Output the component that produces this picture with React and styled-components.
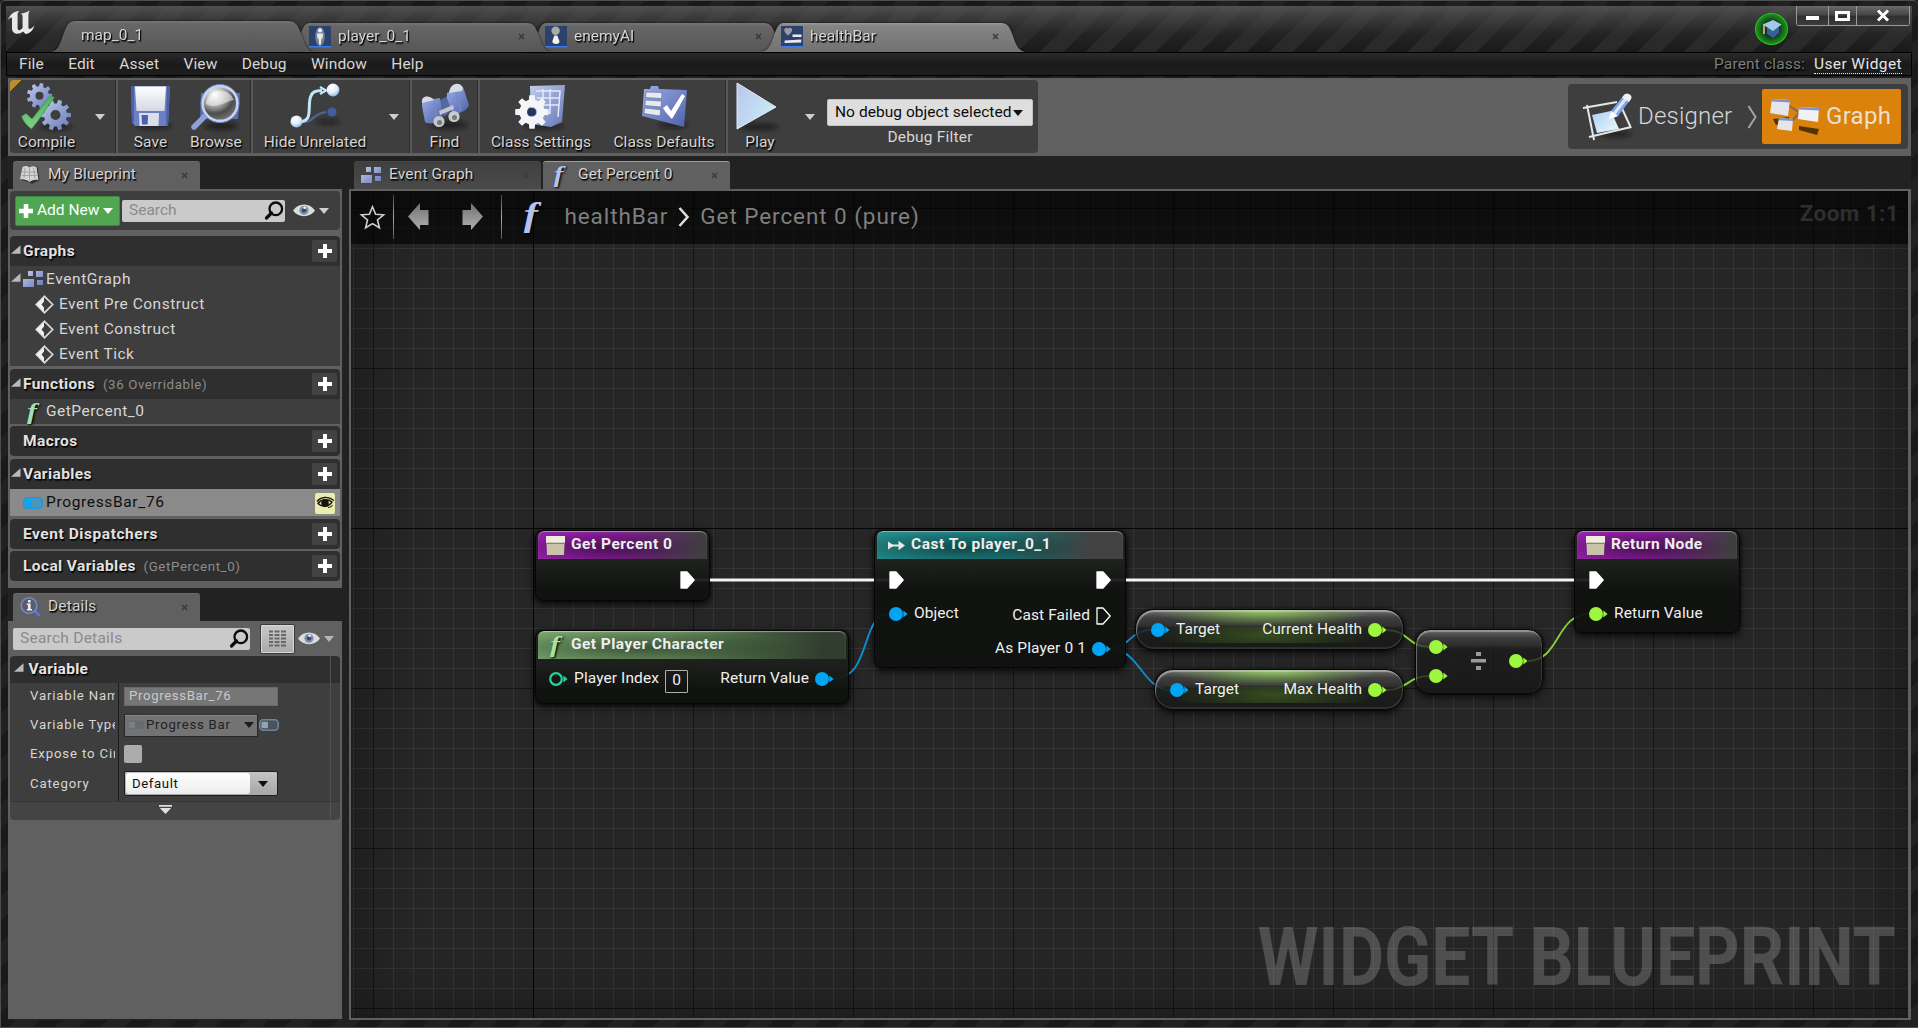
import React from "react";
import styled, { createGlobalStyle, css } from "styled-components";

const Global = createGlobalStyle`
  html, body { margin: 0; padding: 0; background: #1b1b1b; }
  * { box-sizing: border-box; }
  body { overflow: hidden; font-family: Roboto, "Liberation Sans", sans-serif; font-size: 15.5px; color: #d4d4d4; }
  svg { display: block; flex: none; overflow: visible; }
`;

const Text = styled.span`
  white-space: pre;
  line-height: 1;
  flex: none;
  margin-top: ${(p) => p.$dy || 0}px;
  font-size: ${(p) => p.$size || 15.5}px;
  font-weight: ${(p) => p.$weight || 400};
  letter-spacing: ${(p) => p.$ls || 0}px;
  color: ${(p) => p.$color || "#d6d6d6"};
  ${(p) => p.$shadow && css`text-shadow: 1px 1px 1px #000, 1px 2px 1px rgba(0, 0, 0, 0.6);`}
`;

/* ---------- window frame ---------- */

const Window = styled.div`
  width: 1918px;
  height: 1028px;
  display: flex;
  flex-direction: column;
  border: 1px solid #4d4f4e;
  border-width: 1px 0 1px 1px;
  border-radius: 5px 5px 0 0;
  background: repeating-linear-gradient(135deg, #191919 0 16px, #212121 16px 32.5px);
`;

const TitleBar = styled.header`
  height: 46px;
  margin: 5px 6px 0 5px;
  display: flex;
  justify-content: space-between;
  background: linear-gradient(180deg, rgba(84, 84, 84, 0.9) 0, rgba(72, 72, 72, 0.75) 10px, rgba(44, 44, 44, 0.55) 28px, rgba(30, 30, 30, 0.2) 100%),
    repeating-linear-gradient(135deg, #191919 0 16px, #2b2b2b 16px 32.5px);
`;

const TitleLeft = styled.div`
  display: flex;
  align-items: flex-end;
`;

const LogoBox = styled.div`
  width: 45px;
  height: 46px;
  padding: 4px 0 0 1px;
`;

const tabShape = (h) =>
  `path("M0 ${h} C9 ${h - 2} 10 ${h - 13} 14 ${h - 22} C17 ${h - 29} 19 0 25 0 L237 0 C244 0 246 ${h - 28} 249 ${h - 21} C253 ${h - 12} 254 ${h - 2} 263 ${h} Z")`;

const FileTabShell = styled.div`
  width: 263px;
  height: ${(p) => p.$h}px;
  margin-right: -26px;
  position: relative;
  z-index: ${(p) => p.$z};
  filter: drop-shadow(0 0 1px rgba(0, 0, 0, 0.75));
`;

const FileTabFace = styled.div`
  height: 100%;
  clip-path: ${(p) => tabShape(p.$h)};
  background: ${(p) =>
    p.$active
      ? "linear-gradient(180deg, #999 0, #848484 3px, #727272 100%)"
      : "linear-gradient(180deg, #767676 0, #676767 3px, #565656 100%)"};
  display: flex;
  align-items: center;
  gap: 7px;
  padding: 0 26px 2px ${(p) => p.$pad}px;
`;

const Push = styled.div`flex: 1;`;

const TitleRight = styled.div`
  display: flex;
  align-items: flex-start;
  gap: 8px;
  padding-right: 2px;
`;

const Badge = styled.div`
  margin-top: 7px;
  width: 33px;
  height: 32px;
  border-radius: 50%;
  border: 1px solid #19cf19;
  background: radial-gradient(circle, #14351a 35%, #1c7d1c 62%, #17b617 100%);
  display: grid;
  place-items: center;
`;

const WinButtons = styled.div`
  display: flex;
  height: 20px;
  border: 1px solid #9a9a9a;
  border-top: 0;
  border-radius: 0 0 3px 3px;
`;

const WinButton = styled.div`
  width: ${(p) => p.$w}px;
  padding-top: ${(p) => p.$pt || 0}px;
  display: grid;
  place-items: center;
  background: linear-gradient(180deg, #6a6a6a, #474747 45%, #2f2f2f 55%, #3c3c3c);
  & + & { border-left: 1px solid #9a9a9a; }
`;

const MenuBar = styled.nav`
  height: 24px;
  margin: 0 6px 0 5px;
  padding: 1px 9px 0 12px;
  display: flex;
  align-items: center;
  justify-content: space-between;
  border: 1px solid #000;
  background: linear-gradient(180deg, #2b2b2b, #1a1a1a 50%, #1e1e1e);
`;

const MenuGroup = styled.div`
  display: flex;
  gap: ${(p) => p.$gap}px;
  align-items: center;
`;

const ClassLink = styled.div`
  border-bottom: 1px dotted #e5e5e5;
  height: 19px;
  display: flex;
  align-items: center;
`;

/* ---------- toolbar ---------- */

const Toolbar = styled.div`
  height: 78px;
  margin: 2px 7px 0 7px;
  padding: 2px 2px 3px 2px;
  background: #606060;
  display: flex;
  justify-content: space-between;
  align-items: center;
`;

const ToolGroup = styled.div`
  height: 73px;
  width: 1028px;
  display: flex;
  border-radius: 4px;
  background: ${(p) =>
    p.$dirty
      ? "linear-gradient(135deg, #b98e2c 0 8px, transparent 8px), #3e3e3e"
      : "#3e3e3e"};
`;

const ToolSection = styled.div`
  display: flex;
  padding-right: ${(p) => p.$end || 0}px;
  & + & {
    border-left: 2px solid #585858;
    box-shadow: -1px 0 0 #2b2b2b;
  }
`;

const ToolButton = styled.div`
  width: ${(p) => p.$w}px;
  display: flex;
  flex-direction: column;
  align-items: center;
  gap: 3px;
  padding-top: 2px;
`;

const IconSlot = styled.div`
  height: 50px;
  padding-right: ${(p) => p.$nudge || 0}px;
  display: grid;
  place-items: center;
`;

const CaretButton = styled.div`
  width: ${(p) => p.$w}px;
  display: flex;
  justify-content: center;
  padding-top: 34px;
`;

const DebugBox = styled.div`
  width: 206px;
  padding-top: 19px;
  display: flex;
  flex-direction: column;
  align-items: center;
  gap: 4px;
`;

const DebugSelect = styled.div`
  align-self: stretch;
  height: 27px;
  border-radius: 2px;
  background: #dedede;
  border: 1px solid #c2c2c2;
  display: flex;
  align-items: center;
  justify-content: space-between;
  padding: 0 9px 0 7px;
`;

const ModeSwitch = styled.div`
  width: 340px;
  height: 65px;
  margin-right: 1px;
  border-radius: 4px;
  background: #3e3e3e;
  display: flex;
  align-items: center;
  padding: 0 6px 0 15px;
`;

const ModeItem = styled.div`
  height: 55px;
  display: flex;
  align-items: center;
  gap: ${(p) => (p.$active ? 7 : 5)}px;
  ${(p) =>
    p.$active
      ? css`width: 139px; padding-left: 8px; background: #da820b; border-radius: 2px; margin-left: 5px;`
      : css`width: 164px;`}
`;

/* ---------- docking ---------- */

const Work = styled.main`
  flex: 1;
  min-height: 0;
  margin: 0 7px 7px 7px;
  padding-top: 5px;
  display: flex;
  gap: 7px;
  background: #222;
`;

const SideColumn = styled.aside`
  width: 334px;
  display: flex;
  flex-direction: column;
`;

const DockTabs = styled.div`
  display: flex;
  gap: 2px;
  height: 28px;
  margin-top: ${(p) => p.$mt || 0}px;
  padding-left: 5px;
`;

const DockTab = styled.div`
  width: 187px;
  border-radius: 3px 3px 0 0;
  border-top: 1px solid ${(p) => (p.$mark ? "#b9a232" : p.$dim ? "#454545" : "#6b6b6b")};
  background: ${(p) => (p.$dim ? "linear-gradient(180deg, #404040, #4a4a4a)" : "#606060")};
  display: flex;
  align-items: center;
  padding: 0 12px 1px 7px;
`;

const TabIcon = styled.div`
  width: ${(p) => p.$w || 28}px;
  flex: none;
`;

const Panel = styled.section`
  background: #606060;
  padding: 2px 2px 0;
  height: ${(p) => p.$h}px;
`;

const PanelTools = styled.div`
  height: ${(p) => p.$h}px;
  margin-bottom: ${(p) => p.$mb || 0}px;
  border-radius: 4px;
  background: ${(p) => (p.$flat ? "transparent" : "#3e3e3e")};
  display: flex;
  align-items: center;
  padding-left: ${(p) => p.$pl}px;
`;

const AddNew = styled.div`
  width: 105px;
  height: 30px;
  border-radius: 2px;
  background: #50a651;
  border: 1px solid #3d8a40;
  display: flex;
  align-items: center;
  gap: 4px;
  padding-left: 3px;
`;

const SearchField = styled.div`
  width: ${(p) => p.$w}px;
  height: 22px;
  margin-left: ${(p) => p.$ml || 0}px;
  border-radius: 2px;
  background: #cacaca;
  display: flex;
  align-items: center;
  justify-content: space-between;
  padding: 0 1px 0 7px;
`;

const EyeMenu = styled.div`
  display: flex;
  align-items: center;
  gap: 4px;
  margin-left: ${(p) => p.$ml}px;
`;

const SectionHead = styled.div`
  height: 30px;
  margin-top: ${(p) => p.$mt || 0}px;
  border-radius: ${(p) => (p.$open ? "4px 4px 0 0" : "4px")};
  background: #2f2f2f;
  display: flex;
  align-items: center;
  padding-right: 3px;
`;

const Expander = styled.div`
  width: 13px;
  padding: 0 0 4px 1px;
  flex: none;
`;

const PlusButton = styled.div`
  width: 25px;
  height: 22px;
  margin-left: auto;
  border-radius: 2px;
  background: #424242;
  display: grid;
  place-items: center;
`;

const TreeRow = styled.div`
  height: ${(p) => p.$h || 25}px;
  background: ${(p) => (p.$selected ? "#8a8a8a" : "#3e3e3e")};
  display: flex;
  align-items: center;
  padding: 1px 5px 0 ${(p) => p.$pl || 0}px;
  gap: ${(p) => p.$gap || 0}px;
`;

const EyeToggle = styled.div`
  width: 20px;
  height: 21px;
  margin-left: auto;
  border-radius: 2px;
  background: #ecebb0;
  display: grid;
  place-items: center;
`;

const GridToggle = styled.div`
  width: 35px;
  height: 30px;
  margin-left: 10px;
  border: 1px solid #3a3a3a;
  border-radius: 2px;
  background: linear-gradient(180deg, #c9c9c9, #a9a9a9);
  box-shadow: inset 0 0 0 1px #d8d8d8;
  display: grid;
  place-items: center;
`;

const DetailsBox = styled.div`
  height: 164px;
  border-radius: 4px;
  background:
    linear-gradient(#505050, #505050) 320px 0 / 1px 162px no-repeat,
    linear-gradient(#2f2f2f, #2f2f2f) 0 0 / 100% 27px no-repeat,
    #3e3e3e;
  overflow: hidden;
  display: flex;
  flex-direction: column;
`;

const DetailsHead = styled.div`
  height: 27px;
  display: flex;
  align-items: center;
  gap: 5px;
  padding-left: 4px;
`;

const HeadArrow = styled.div`padding-bottom: 4px;`;

const PropRow = styled.div`
  height: ${(p) => p.$h}px;
  display: grid;
  grid-template-columns: 109px 1fr;
`;

const PropName = styled.div`
  padding-left: 20px;
  border-right: 1px solid #1c1c1c;
  display: flex;
  align-items: center;
`;

const Clip = styled.div`
  width: 85px;
  height: 18px;
  display: flex;
  align-items: center;
  overflow: hidden;
`;

const PropValue = styled.div`
  display: flex;
  align-items: center;
  gap: 1px;
  padding-left: 5px;
`;

const TextInput = styled.div`
  width: 154px;
  height: 19px;
  background: #767676;
  border: 1px solid #6a6a6a;
  display: flex;
  align-items: center;
  padding-left: 4px;
`;

const TypeButton = styled.div`
  width: 134px;
  height: 23px;
  background: #737373;
  border: 1px solid #272727;
  border-top-color: #333;
  box-shadow: inset 0 1px 0 #858585;
  display: flex;
  align-items: center;
  padding: 0 3px 0 1px;
`;

const CheckBox = styled.div`
  width: 18px;
  height: 18px;
  border-radius: 2px;
  background: #acacac;
`;

const Combo = styled.div`
  width: 154px;
  height: 25px;
  border: 1px solid #1f1f1f;
  border-radius: 2px;
  background: linear-gradient(180deg, #c4c4c4, #a6a6a6);
  display: flex;
  align-items: center;
`;

const ComboText = styled.div`
  width: 124px;
  height: 21px;
  margin: 0 8px 0 1px;
  border-radius: 3px;
  background: linear-gradient(180deg, #fff, #ececec);
  display: flex;
  align-items: center;
  padding-left: 6px;
`;

const MoreBar = styled.div`
  flex: 1;
  background: rgba(255, 255, 255, 0.035);
  border-top: 1px solid #373737;
  display: flex;
  justify-content: center;
  padding: 3px 20px 0 0;
`;

/* ---------- graph canvas ---------- */

const GraphColumn = styled.div`
  flex: 1;
  display: flex;
  flex-direction: column;
`;

const Canvas = styled.div`
  flex: 1;
  position: relative;
  overflow: hidden;
  border: 2px solid #606060;
  border-right-width: 3px;
  background:
    linear-gradient(#050505, #050505) 182px 0 / 1px 100% no-repeat,
    linear-gradient(#050505, #050505) 0 337px / 100% 1px no-repeat,
    linear-gradient(90deg, #141414 1px, transparent 1px) 22px 0 / 160px 160px,
    linear-gradient(180deg, #141414 1px, transparent 1px) 0 17px / 160px 160px,
    linear-gradient(90deg, #353535 1px, transparent 1px) 2px 0 / 20px 20px,
    linear-gradient(180deg, #353535 1px, transparent 1px) 0 17px / 20px 20px,
    #262626;
`;

const Vignette = styled.div`
  position: absolute;
  inset: 0;
  box-shadow: inset 0 0 70px rgba(0, 0, 0, 0.4);
`;

const Crumbs = styled.div`
  position: relative;
  height: 53px;
  background: rgba(0, 0, 0, 0.6);
  display: flex;
  align-items: center;
  padding: 0 9px 2px 9px;
`;

const CrumbRule = styled.div`
  width: 1px;
  height: 44px;
  margin-right: ${(p) => p.$mr}px;
  background: linear-gradient(180deg, #444, #aaa 50%, #555);
`;

const CrumbIcon = styled.div`margin: 0 ${(p) => p.$mr}px 0 ${(p) => p.$ml || 0}px;`;

const ZoomLabel = styled.div`padding-bottom: 7px; display: flex;`;

const Watermark = styled.div`
  position: absolute;
  right: 12px;
  bottom: 20px;
  font-size: 81.5px;
  line-height: 1;
  font-weight: 700;
  white-space: pre;
  color: rgba(255, 255, 255, 0.19);
  transform-origin: 100% 50%;
  transform: scaleX(0.852);
`;

const Wires = styled.svg`
  position: absolute;
  left: 0;
  top: 0;
`;

const Node = styled.div`
  position: absolute;
  left: ${(p) => p.$x - 351}px;
  top: ${(p) => p.$y - 191}px;
  width: ${(p) => p.$w}px;
  height: ${(p) => p.$h}px;
  border-radius: 8px;
  border: 1px solid #060606;
  overflow: hidden;
  background: linear-gradient(180deg, rgba(30, 32, 30, 0.93) 30px, rgba(14, 17, 14, 0.93) 60px, rgba(14, 17, 14, 0.95));
`;

const NodeShadow = styled.div`
  position: absolute;
  left: ${(p) => p.$x - 351}px;
  top: ${(p) => p.$y - 191}px;
  width: ${(p) => p.$w}px;
  height: ${(p) => p.$h}px;
  border-radius: ${(p) => p.$r || 8}px;
  box-shadow: 0 3px 8px rgba(0, 0, 0, 0.75), 0 0 3px rgba(0, 0, 0, 0.8);
`;

const headTint = {
  purple: "radial-gradient(ellipse 55% 60% at 42% 60%, rgba(30,8,34,.6), transparent), linear-gradient(100deg, #931fa8 0, #8a1c9e 45%, #5b2f63 75%, #3e3e3e 96%)",
  teal: "radial-gradient(ellipse 50% 60% at 36% 60%, rgba(6,34,34,.6), transparent), linear-gradient(100deg, #228a8a 0, #1e7f7f 48%, #2d5555 70%, #424242 86%)",
  green: "radial-gradient(ellipse 50% 60% at 34% 60%, rgba(30,42,28,.6), transparent), linear-gradient(100deg, #74a06a 0, #688f5e 42%, #435e3e 70%, #313d2f 92%)",
};

const NodeHead = styled.div`
  height: 28px;
  margin: 0 2px;
  border-radius: 6px 6px 0 0;
  background: ${(p) => headTint[p.$tint]};
  box-shadow: inset 0 1px 1px rgba(255, 255, 255, 0.45);
  display: flex;
  align-items: center;
  padding: 2px 0 2px ${(p) => p.$pl || 8}px;
`;

const HeadIcon = styled.div`width: ${(p) => p.$w || 25}px;`;

const PinRow = styled.div`
  height: ${(p) => p.$h}px;
  margin-top: ${(p) => p.$mt || 0}px;
  padding: 0 ${(p) => p.$pr || 14}px 0 ${(p) => p.$pl || 14}px;
  display: flex;
  align-items: center;
  justify-content: ${(p) => (p.$end ? "flex-end" : "space-between")};
`;

const PinGroup = styled.div`
  display: flex;
  align-items: center;
  gap: 6px;
  padding-top: ${(p) => p.$drop || 0}px;
`;

const IndexBox = styled.div`
  width: 23px;
  height: 23px;
  margin-top: 4px;
  border: 1px solid #b0b0b0;
  border-radius: 1px;
  display: grid;
  place-items: center;
`;

const Pill = styled(Node)`
  border-radius: 19px;
  display: flex;
  align-items: center;
  justify-content: space-between;
  padding: 1px 16px 0 15px;
  background:
    radial-gradient(ellipse 42% 100% at 48% 0, rgba(156, 212, 104, 0.9), rgba(125, 176, 84, 0.45) 60%, transparent) 0 0 / 100% 17px no-repeat,
    radial-gradient(ellipse 42% 140% at 48% 50%, rgba(62, 92, 32, 0.75), transparent) 0 17px / 100% 16px no-repeat,
    linear-gradient(180deg, #707070 0, rgba(64, 64, 64, 0.9) 8px, rgba(50, 50, 50, 0.8) 16px, rgba(26, 28, 26, 0.8) 18px, rgba(20, 22, 20, 0.8) 100%);
  box-shadow: inset 1px 2px 1px rgba(220, 220, 220, 0.5), inset -1px 0 1px rgba(150, 150, 150, 0.3), inset 0 -2px 1px rgba(110, 110, 110, 0.25);
`;

const MathNode = styled(Node)`
  border-radius: 15px;
  background: linear-gradient(180deg, #686868 0, rgba(62, 62, 62, 0.9) 8px, rgba(46, 46, 46, 0.75) 16px, rgba(26, 26, 26, 0.75) 18px, rgba(22, 22, 22, 0.8) 100%);
  box-shadow: inset 1px 2px 1px rgba(210, 210, 210, 0.45), inset -1px 0 1px rgba(150, 150, 150, 0.25);
  display: flex;
  align-items: center;
  justify-content: space-between;
  padding: 0 14px 1px 13px;
`;

const PinColumn = styled.div`
  display: flex;
  flex-direction: column;
  gap: 15px;
`;

/* ---------- icons ---------- */

const gear = (cx, cy, r, n) => {
  const pts = [];
  for (let i = 0; i < n; i++) {
    const a = (i / n) * Math.PI * 2;
    const s = (Math.PI * 2) / n;
    [[-0.32, 0.74], [-0.2, 1], [0.2, 1], [0.32, 0.74]].forEach(([o, k]) => {
      pts.push(`${(cx + Math.cos(a + o * s) * r * k).toFixed(2)} ${(cy + Math.sin(a + o * s) * r * k).toFixed(2)}`);
    });
  }
  return `M${pts.join("L")}Z`;
};

const DefsHost = styled.svg`
  position: absolute;
`;

const Defs = () => (
  <DefsHost width="0" height="0">
    <defs>
      <linearGradient id="blue" x1="0" y1="0" x2="1" y2="1">
        <stop offset="0" stopColor="#c3cdec" />
        <stop offset="1" stopColor="#6478b8" />
      </linearGradient>
      <linearGradient id="deep" x1="0" y1="0" x2="1" y2="1">
        <stop offset="0" stopColor="#9bade6" />
        <stop offset="1" stopColor="#4d62a8" />
      </linearGradient>
      <linearGradient id="pale" x1="0" y1="0" x2="0" y2="1">
        <stop offset="0" stopColor="#fff" />
        <stop offset="1" stopColor="#d4d8e4" />
      </linearGradient>
      <linearGradient id="check" x1="0" y1="0" x2="0" y2="1">
        <stop offset="0" stopColor="#49b25b" />
        <stop offset="1" stopColor="#7fd08a" />
      </linearGradient>
      <radialGradient id="lens" cx=".35" cy=".25" r=".9">
        <stop offset="0" stopColor="#fff" />
        <stop offset=".4" stopColor="#9a9a9a" />
        <stop offset=".6" stopColor="#4c4c4c" />
        <stop offset="1" stopColor="#8d8d8d" />
      </radialGradient>
      <radialGradient id="ball" cx=".4" cy=".3" r=".8">
        <stop offset="0" stopColor="#fff" />
        <stop offset=".5" stopColor="#e4efff" />
        <stop offset="1" stopColor="#7aa5dd" />
      </radialGradient>
      <linearGradient id="play" x1="0" y1="0" x2="1" y2=".6">
        <stop offset="0" stopColor="#b9c5ec" />
        <stop offset="1" stopColor="#c8ecf4" />
      </linearGradient>
      <linearGradient id="sketch" x1="0" y1="0" x2="1" y2="1">
        <stop offset="0" stopColor="#aacdf3" />
        <stop offset="1" stopColor="#f2fbff" />
      </linearGradient>
      <linearGradient id="grey" x1="0" y1="0" x2="0" y2="1">
        <stop offset="0" stopColor="#707070" />
        <stop offset="1" stopColor="#b0b0b0" />
      </linearGradient>
      <filter id="soft" x="-50%" y="-100%" width="200%" height="300%">
        <feGaussianBlur stdDeviation="2" />
      </filter>
    </defs>
  </DefsHost>
);

const Shade = ({ cx, cy, rx, ry }) => (
  <ellipse cx={cx} cy={cy} rx={rx} ry={ry} fill="#111" opacity=".6" filter="url(#soft)" />
);

const Logo = () => (
  <svg width="28" height="25" viewBox="0 0 28 25">
    <path
      d="M1 10 C3 4 7 1.5 12 1 L10.6 3.4 V18 C10.6 20 12 20.6 13.2 20 L15.6 18 V5.4 L14 3.6 C17 3.4 20 2.4 22.6 0.6 L21.4 4 V17.4 C21.6 19.6 24 19.4 27.4 15.4 C26 20.6 22.6 23.6 18.6 24 L16 21.4 C13.6 23.6 10.6 24 8.4 23.4 C6 22.6 5 21 5 18.6 V9 C5 6.6 3 7.4 1 10 Z"
      fill="#e8e8e8"
    />
  </svg>
);

const CloseX = () => (
  <svg width="7" height="7" viewBox="0 0 7 7">
    <path d="M1 1L6 6M6 1L1 6" stroke="#3a3a3a" strokeWidth="1.500" />
  </svg>
);

const Caret = ({ w = 10, h = 6, color = "#cfcfcf" }) => (
  <svg width={w} height={h} viewBox="0 0 10 6">
    <path d="M0 0H10L5 6Z" fill={color} />
  </svg>
);

const AssetIcon = ({ kind }) => (
  <svg width="22" height="21" viewBox="0 0 22 21">
    <rect width="22" height="21" fill="#2c426d" />
    <rect y="20" width="22" height="1.4" fill="#3b7cf0" />
    {kind === "player" && (
      <g>
        <ellipse cx="11" cy="10.5" rx="4.800" ry="9.6" fill="#8f9aac" opacity=".7" />
        <circle cx="11" cy="4.4" r="2.1" fill="#eee" />
        <path d="M7.8 7.4h6.4l-.8 5.4h-1l-.6 6h-1.6l-.6-6h-1z" fill="#e6e6e6" />
      </g>
    )}
    {kind === "pawn" && (
      <g>
        <circle cx="10.6" cy="4.8" r="4.2" fill="#a9a9a9" />
        <path d="M9.400 9.400h2.800L14.400 15c1.200 4-7.800 4-7 0z" fill="#f2f2f2" />
      </g>
    )}
    {kind === "widget" && (
      <g>
        <path d="M7 9.400C1.600 5.600 3 1.600 5.600 1.800 6.600 1.800 7 3 7 3s.800-1.400 2-1.200C11.800 2 12.400 6 7 9.400Z" fill="#9c9c9c" />
        <path d="M11.500 8.500h9v2.400h-9zM3.600 14.600l16.600-1v2.800l-16.600.600z" fill="#eaeaea" />
      </g>
    )}
  </svg>
);

const CapIcon = () => (
  <svg width="20" height="20" viewBox="0 0 20 20">
    <path d="M5 9v6l6 4 6-5V8z" fill="#35609b" />
    <path d="M.6 5.600L11 1l8.600 4.600L11 12z" fill="#a3c9e8" />
    <path d="M2 6v9" stroke="#c9b878" strokeWidth="1.800" />
  </svg>
);

const CompileIcon = () => (
  <svg width="50" height="48" viewBox="0 0 50 48">
    <Shade cx={34} cy={44} rx={16} ry={3} />
    <path d={`${gear(17.5, 12.8, 12.8, 9)}M21.500 12.800a4 4 0 1 0-8 0a4 4 0 1 0 8 0Z`} fill="url(#blue)" fillRule="evenodd" />
    <path d={`${gear(33.5, 32, 15.5, 10)}M38.500 32a5 5 0 1 0-10 0a5 5 0 1 0 10 0Z`} fill="url(#blue)" fillRule="evenodd" />
    <path d="M-.5 33.500L4 30.500L10 36L28.500 12.500L32.500 14.500C25 24 18 36 9.500 46C6 43 2 40-.5 33.500Z" fill="url(#check)" stroke="#3e8f4d" strokeWidth=".6" />
  </svg>
);

const SaveIcon = () => (
  <svg width="42" height="44" viewBox="0 0 42 44">
    <Shade cx={24} cy={41} rx={18} ry={3} />
    <path d="M1 1H40L38 41H5L2 37Z" fill="#6b80c4" />
    <path d="M1 1H4V37H2ZM37 1h3l-2 40h-2z" fill="#4b62ab" />
    <path d="M5 1.500H36L34.500 26H6.500Z" fill="url(#pale)" />
    <path d="M9 28H29L28.500 41H9.500Z" fill="#dcdfe8" />
    <path d="M11.500 30h6.500l-.4 9.500h-5.600z" fill="#4a62ae" />
  </svg>
);

const BrowseIcon = () => (
  <svg width="50" height="47" viewBox="0 0 50 47">
    <Shade cx={30} cy={42} rx={17} ry={4} />
    <path d="M10 9h39l-2 26H9z" fill="#5b6fae" />
    <path d="M15 31L3 43" stroke="#8ea0d6" strokeWidth="5.500" strokeLinecap="round" />
    <circle cx="29" cy="19.500" r="17.600" fill="url(#lens)" stroke="#c9d5f4" strokeWidth="3" />
    <circle cx="29" cy="19.500" r="19" fill="none" stroke="#7387c2" strokeWidth="1" />
    <path d="M15 20a14.500 14.500 0 0 1 28-4c-8 1-18 10-28 4z" fill="#fff" opacity=".5" />
  </svg>
);

const HideIcon = () => (
  <svg width="50" height="46" viewBox="0 0 50 46">
    <Shade cx={38} cy={38} rx={12} ry={2.5} />
    <path d="M8 38C26 40 20 30 36 28" stroke="#4d6795" strokeWidth="2" fill="none" />
    <circle cx="42" cy="28" r="4.600" fill="#3f5e9d" />
    <path d="M8 38C24 38 17 24 20.500 13C22 8 25 6.500 32 6.500" stroke="#bfe7fb" strokeWidth="3" fill="none" />
    <path d="M30 3L36 6.500L30 10" stroke="#bfe7fb" strokeWidth="2.200" fill="none" />
    <circle cx="43" cy="6" r="6.400" fill="url(#ball)" />
    <circle cx="6.500" cy="37.500" r="6" fill="url(#ball)" />
  </svg>
);

const FindIcon = () => (
  <svg width="48" height="46" viewBox="0 0 48 46">
    <Shade cx={28} cy={41} rx={19} ry={4} />
    <path d="M18 17l10-6 4 14-9 8z" fill="#54699f" />
    <path d="M1 17L19 14L22 35C19 39 8 41 4 38L1 22Z" fill="url(#deep)" />
    <path d="M26 9L42 3L48 21C46 27 37 31 31 29L26 14Z" fill="url(#deep)" />
    <path d="M1 19C0 12 6 11 11 14L13 16ZM28 9C29-1 39-3 42 4L41 7Z" fill="#d8dbe4" />
    <path d="M13 17l3 20M35 8l5 19" stroke="#7589c8" strokeWidth="1.500" fill="none" />
    <path d="M18 27l14-6 1 4-14 6z" fill="#c3c7d2" />
    <circle cx="18" cy="37.500" r="5.600" fill="#c4c6ca" /><circle cx="18.500" cy="38.500" r="2.500" fill="#75787f" />
    <circle cx="33" cy="32.500" r="5.600" fill="#c9cbcf" /><circle cx="33.500" cy="33.500" r="2.500" fill="#75787f" />
  </svg>
);

const SettingsIcon = () => (
  <svg width="50" height="46" viewBox="0 0 50 46">
    <Shade cx={28} cy={42} rx={20} ry={3} />
    <path d="M14 2L49 1L46 38L35 43L15 40Z" fill="url(#blue)" />
    <path d="M20 7H44L42 33M21 14H43M22 21H43M27 5V24M34 5V30" stroke="#e3e9fb" strokeWidth="1.500" fill="none" />
    <path d={`${gear(16, 28, 17, 8)}M21 28a5 5 0 1 0-10 0a5 5 0 1 0 10 0Z`} fill="#f4f5f9" fillRule="evenodd" />
    <circle cx="16" cy="28" r="4" fill="#25345c" />
  </svg>
);

const DefaultsIcon = () => (
  <svg width="47" height="42" viewBox="0 0 47 42">
    <Shade cx={32} cy={39} rx={15} ry={3} />
    <path d="M3 3L9 3L10 0H17L18 3L46 4L43 41L1 30Z" fill="url(#deep)" />
    <path d="M5 6l16 .5-.4 6L4.600 11.500zM4.500 14l16 1-.4 6L3.800 19.500zM3.600 22l16 1.700-.5 6.300L3 27.500z" fill="#e8eaf0" stroke="#5b6a9b" strokeWidth=".6" />
    <path d="M22 22L26 19L30 25L41 8L44 10C40 17 36 25 31 33C28 30 25 27 22 22Z" fill="#fff" />
  </svg>
);

const PlayIcon = () => (
  <svg width="42" height="50" viewBox="0 0 42 50">
    <Shade cx={23} cy={45} rx={19} ry={3.5} />
    <path d="M1 1V47L40 25Z" fill="url(#play)" stroke="#e5ebfa" strokeWidth="1" />
  </svg>
);

const DesignerIcon = () => (
  <svg width="50" height="48" viewBox="0 0 50 48">
    <Shade cx={33} cy={41} rx={16} ry={3} />
    <path d="M4 12L11 47M0 15L34 9M6 44L48 34M37 11L48 35" stroke="#e6e6e6" strokeWidth="2" />
    <path d="M9 22L28 18L36 36L14 40Z" fill="url(#sketch)" />
    <path d="M25 27L28 18L41 2C44-1 50 2 48 6L35 23Z" fill="#7fa5e8" />
    <path d="M31 21L44 4" stroke="#dbe8fb" strokeWidth="3" />
    <path d="M41 2C44-1 50 2 48 6L46 9L39 4.500Z" fill="#f0f0f0" />
    <path d="M25 27L28 18L35 23Z" fill="#fff" />
  </svg>
);

const GraphIcon = () => (
  <svg width="49" height="36" viewBox="0 0 49 36">
    <path d="M3 20l16-2v5l-13 3zM29 27l20 3-2 6-18-5z" fill="#3b2604" opacity=".85" />
    <path d="M18 6L30 14M22 22L30 13" stroke="#7c6a58" strokeWidth="2" fill="none" />
    <path d="M2 0L20 1L18 17L0 14Z" fill="#e6e6ea" /><path d="M2 0L20 1V3.500L1.700 2.500Z" fill="#8092cf" />
    <path d="M29 8L49 9L48 23L28 20Z" fill="#f1f1f4" /><path d="M29 8L49 9V11.500L29 10.500Z" fill="#8092cf" />
    <path d="M9 19L23 20L22 32L7 30Z" fill="#e6e6ea" /><path d="M9 19L23 20V22L8.800 21.300Z" fill="#8092cf" />
  </svg>
);

const BookIcon = () => (
  <svg width="20" height="19" viewBox="0 0 20 19">
    <path d="M1 14L3 1C6-.5 8 0 10 1.500C12 0 15-.5 17.500 1L19.500 14L12 18L9 16Z" fill="#111" opacity=".6" />
    <path d="M0 13.500L2.500 1C5-.5 8 0 9.500 1.500C11.500 0 14.500 0 16.500 1L18.500 14C15 13.500 12 14 9.700 16C7 14 3.500 13 0 13.500Z" fill="#d4d4d4" />
    <path d="M9.500 2v13M5 2L4 12M13.500 2l1.500 11M2 6h15M1.500 9.500h16" stroke="#9a9a9a" strokeWidth=".8" />
  </svg>
);

const GraphsIcon = ({ w = 20 }) => (
  <svg width={w} height={w * 0.85} viewBox="0 0 20 17">
    <path d="M5 0h5v5H5zM13 0h7v6h-7zM0 8h11v8H0zM14 9h6v5h-6z" fill="url(#blue)" />
  </svg>
);

const InfoIcon = () => (
  <svg width="21" height="20" viewBox="0 0 21 20">
    <path d="M14 13L19 18" stroke="#5776cf" strokeWidth="3" strokeLinecap="round" />
    <circle cx="9" cy="8.500" r="7.800" fill="#5b5e66" stroke="#6f8ad8" strokeWidth="1.600" />
    <path d="M8 3h2.600v2.400H8zM6.800 6.500h3.800v5.500h1.400v1.500H6.800V12H8V8H6.800z" fill="#eee" />
  </svg>
);

const SearchIcon = () => (
  <svg width="19" height="19" viewBox="0 0 19 19">
    <circle cx="10.800" cy="7.800" r="6.300" fill="none" stroke="#0c0c0c" strokeWidth="2.300" />
    <path d="M6.500 12L1.500 17" stroke="#0c0c0c" strokeWidth="3.200" strokeLinecap="round" />
  </svg>
);

const EyeIcon = () => (
  <svg width="22" height="13" viewBox="0 0 22 13">
    <path d="M0 6.500C5-1.500 17-1.500 22 6.500C17 14 5 14 0 6.500Z" fill="#dcdcdc" />
    <circle cx="11" cy="6.300" r="4.600" fill="#7f90ae" />
    <circle cx="11" cy="6.300" r="2.200" fill="#3a4868" />
    <circle cx="11.600" cy="3.800" r="1.300" fill="#fff" />
  </svg>
);

const DarkEyeIcon = () => (
  <svg width="17" height="13" viewBox="0 0 17 13">
    <path d="M0 4.500C4-.5 11-1 17 3.500M1 6.500C4 2 11 1.500 15 5C11 10.500 5 10.500 1 6.500Z" fill="none" stroke="#15150c" strokeWidth="1.400" />
    <circle cx="8" cy="6" r="3.800" fill="#15150c" />
    <path d="M11 10.500C14 10 15 9.500 15.500 8" stroke="#15150c" fill="none" />
  </svg>
);

const Cross = ({ s = 14, t = 4 }) => (
  <svg width={s} height={s} viewBox="0 0 14 14">
    <path d="M7 0V14M0 7H14" stroke="#fff" strokeWidth={t} />
  </svg>
);

const TreeArrow = () => (
  <svg width="9.500" height="9" viewBox="0 0 10 9">
    <path d="M10 0V9H0Z" fill="#b9b9b9" />
  </svg>
);

const EventDiamond = () => (
  <svg width="19" height="19" viewBox="0 0 19 19">
    <path d="M9.500 1.300L17.700 9.500L9.500 17.700L1.300 9.500Z" fill="none" stroke="#d9d9d9" strokeWidth="1.700" />
    <path d="M9 2.400V6.500L6.500 9.500L9 12.500V16.600L1.600 9.500Z" fill="#f2f2f2" />
  </svg>
);

const BarIcon = ({ muted }) => (
  <svg width="20" height="12" viewBox="0 0 20 12" opacity={muted === "faint" ? 0.25 : 1}>
    <rect x=".8" y=".8" width="18.400" height="10.400" rx="3.500" fill={muted ? "#4a525b" : "#4d97bd"} stroke={muted ? "#6f8496" : "#1899e0"} strokeWidth="1.600" />
    <rect x="2.500" y="2.800" width="6.500" height="6.400" rx="1" fill={muted ? "#93a3b3" : "#00a8ff"} />
  </svg>
);

const ListIcon = () => (
  <svg width="17" height="17" viewBox="0 0 17 17">
    <path d="M0 1.500H4M5.500 1.500H10.500M12 1.500H17M0 5H4M5.500 5H10.500M12 5H17M0 8.500H4M5.500 8.500H10.500M12 8.500H17M0 12H4M5.500 12H10.500M12 12H17M0 15.500H4M5.500 15.500H10.500M12 15.500H17" stroke="#686868" strokeWidth="2" />
  </svg>
);

const FuncGlyph = styled.span`
  display: block;
  font-family: "Liberation Serif", serif;
  font-style: italic;
  font-weight: 700;
  line-height: 1;
  width: ${(p) => p.$size * 0.75}px;
  font-size: ${(p) => p.$size}px;
  color: ${(p) => p.$color || "#b4c2f0"};
  text-align: center;
  text-shadow: 1px 1px 2px #000;
  transform: translateY(-6%) scaleX(1.25);
`;

const ArrowShape = styled.svg`
  transform: ${(p) => (p.$flip ? "scaleX(-1)" : "none")};
`;

const ArrowIcon = ({ flip }) => (
  <ArrowShape $flip={flip} width="22" height="30" viewBox="0 0 22 30">
    <path d="M0 14.500L12 1V8H20.500V23H12V28Z" fill="url(#grey)" />
  </ArrowShape>
);

const StarIcon = () => (
  <svg width="25" height="24" viewBox="0 0 25 24">
    <path d="M12.500 1.800L15.600 9.200L23.600 9.800L17.500 15L19.400 22.800L12.500 18.600L5.600 22.800L7.500 15L1.400 9.800L9.400 9.200Z" fill="none" stroke="#d0d0d0" strokeWidth="1.600" />
  </svg>
);

const Chevron = ({ w = 11, h = 20, color = "#dedede", t = 2.6 }) => (
  <svg width={w} height={h} viewBox={`0 0 ${w} ${h}`}>
    <path d={`M1.500 1L${w - 1.5} ${h / 2}L1.500 ${h - 1}`} fill="none" stroke={color} strokeWidth={t} />
  </svg>
);

const ExecPin = ({ hollow }) => (
  <svg width="15" height="18" viewBox="0 0 15 18">
    <path d="M1 1H7L14.200 9L7 17H1Z" fill={hollow ? "none" : "#fff"} stroke="#fff" strokeWidth="1.300" strokeLinejoin="round" />
  </svg>
);

const Pin = ({ color = "#00a5f5", hollow }) => (
  <svg width="19" height="14" viewBox="0 0 19 14">
    <circle cx="7" cy="7" r={hollow ? 5.8 : 7} fill={hollow ? "none" : color} stroke={color} strokeWidth={hollow ? 2.2 : 0} />
    <path d="M14.300 3.500L18.600 7L14.300 10.500Z" fill={color} />
  </svg>
);

const EntryIcon = () => (
  <svg width="19" height="19" viewBox="0 0 19 19">
    <path d="M0 0H19V7H0Z" fill="#efece2" />
    <path d="M.5 7.500H18.500L18 19H1Z" fill="#c9c3a8" />
    <path d="M0 7.200H19" stroke="#8a8470" />
  </svg>
);

const CastIcon = () => (
  <svg width="17" height="11" viewBox="0 0 17 11">
    <path d="M0 1.500L6 5.500L0 9.500ZM10.500 .8L17 5.500L10.500 10.200Z" fill="#e8e8e8" />
    <path d="M3 5.500H13" stroke="#e8e8e8" strokeWidth="2" />
  </svg>
);

const DivideIcon = () => (
  <svg width="15" height="18" viewBox="0 0 15 18">
    <path d="M5 0h5v4H5zM0 7h15v3.500H0zM5 14h5v4H5z" fill="#9a9a9a" />
  </svg>
);

/* ---------- composed parts ---------- */

const GREEN = "#9cf73f";

const FileTab = ({ label, icon, h = 29, z, active, pad }) => (
  <FileTabShell $h={h} $z={z}>
    <FileTabFace $h={h} $active={active} $pad={pad}>
      {icon && <AssetIcon kind={icon} />}
      <Text $shadow>{label}</Text>
      <Push />
      {icon && <CloseX />}
    </FileTabFace>
  </FileTabShell>
);

const Tool = ({ w, icon, label, ls = 0.05, nudge }) => (
  <ToolButton $w={w}>
    <IconSlot $nudge={nudge}>{icon}</IconSlot>
    <Text $shadow $ls={ls}>{label}</Text>
  </ToolButton>
);

const Section = ({ title, note, open, mt, ls = 0.4 }) => (
  <SectionHead $mt={mt} $open={open}>
    <Expander>{open && <TreeArrow />}</Expander>
    <Text $weight={700} $shadow $ls={ls} $dy={1} $color="#e2e2e2">{title}</Text>
    {note && <Text $size={13.3} $ls={0.6} $dy={2} $color="#8c8c8c">{`  ${note}`}</Text>}
    <PlusButton><Cross /></PlusButton>
  </SectionHead>
);

const Dock = ({ icon, label, dim, mark, iw, ls = 0.15 }) => (
  <DockTab $dim={dim} $mark={mark}>
    <TabIcon $w={iw}>{icon}</TabIcon>
    <Text $shadow $ls={ls}>{label}</Text>
    <Push />
    <CloseX />
  </DockTab>
);

const Prop = ({ name, h, children }) => (
  <PropRow $h={h}>
    <PropName><Clip><Text $size={13.2} $ls={0.85}>{name}</Text></Clip></PropName>
    <PropValue>{children}</PropValue>
  </PropRow>
);

const PinText = ({ children, ls = 0.05 }) => <Text $color="#f0f0f0" $ls={ls}>{children}</Text>;

const NodeTitle = ({ children, ls = 0.5 }) => <Text $weight={700} $color="#eee" $ls={ls}>{children}</Text>;

const menus = ["File", "Edit", "Asset", "View", "Debug", "Window", "Help"];

const nodes = {
  entry: { $x: 535, $y: 530, $w: 175, $h: 71 },
  char: { $x: 535, $y: 630, $w: 314, $h: 74 },
  cast: { $x: 874, $y: 530, $w: 252, $h: 138 },
  cur: { $x: 1135, $y: 609, $w: 269, $h: 41 },
  max: { $x: 1154, $y: 669, $w: 250, $h: 41 },
  div: { $x: 1415, $y: 629, $w: 128, $h: 65 },
  ret: { $x: 1574, $y: 530, $w: 166, $h: 103 },
};

const corner = { cur: 19, max: 19, div: 15 };

export default function App() {
  return (
    <Window>
      <Global />
      <Defs />
      <TitleBar>
        <TitleLeft>
          <LogoBox><Logo /></LogoBox>
          <FileTab label="map_0_1" h={31} z={4} pad={30} />
          <FileTab label="player_0_1" icon="player" z={3} pad={21} />
          <FileTab label="enemyAI" icon="pawn" z={2} pad={20} />
          <FileTab label="healthBar" icon="widget" z={5} pad={19} active />
        </TitleLeft>
        <TitleRight>
          <Badge><CapIcon /></Badge>
          <WinButtons>
            <WinButton $w={31} $pt={4}>
              <svg width="13" height="5"><rect width="13" height="4" y="1" fill="#fff" /></svg>
            </WinButton>
            <WinButton $w={28}>
              <svg width="15" height="11"><path d="M1.500 2.500H13.500V9.500H1.500Z" fill="none" stroke="#fff" strokeWidth="3" /></svg>
            </WinButton>
            <WinButton $w={53}>
              <svg width="12" height="11"><path d="M1 .5L11 10.500M11 .5L1 10.500" stroke="#fff" strokeWidth="3" /></svg>
            </WinButton>
          </WinButtons>
        </TitleRight>
      </TitleBar>

      <MenuBar>
        <MenuGroup $gap={24.4}>
          {menus.map((m) => <Text key={m} $ls={0.1} $dy={1}>{m}</Text>)}
        </MenuGroup>
        <MenuGroup $gap={9}>
          <Text $color="#7e7e7e" $shadow $ls={0.15}>Parent class:</Text>
          <ClassLink><Text $color="#e5e5e5" $ls={0.4} $dy={1}>User Widget</Text></ClassLink>
        </MenuGroup>
      </MenuBar>

      <Toolbar>
        <ToolGroup $dirty>
          <ToolSection>
            <Tool w={73} icon={<CompileIcon />} label="Compile" />
            <CaretButton $w={33}><Caret /></CaretButton>
          </ToolSection>
          <ToolSection $end={2}>
            <Tool w={65} icon={<SaveIcon />} label="Save" />
            <Tool w={66} icon={<BrowseIcon />} label="Browse" />
          </ToolSection>
          <ToolSection>
            <Tool w={124} icon={<HideIcon />} label="Hide Unrelated" />
            <CaretButton $w={33}><Caret /></CaretButton>
          </ToolSection>
          <ToolSection $end={1}>
            <Tool w={65} icon={<FindIcon />} label="Find" />
          </ToolSection>
          <ToolSection>
            <Tool w={122} icon={<SettingsIcon />} label="Class Settings" ls={0.1} />
            <Tool w={124} icon={<DefaultsIcon />} label="Class Defaults" ls={0.1} />
          </ToolSection>
          <ToolSection $end={5}>
            <Tool w={64} icon={<PlayIcon />} label="Play" nudge={6} />
            <CaretButton $w={35}><Caret /></CaretButton>
            <DebugBox>
              <DebugSelect>
                <Text $color="#0c0c0c" $ls={0.05}>No debug object selected</Text>
                <Caret color="#111" />
              </DebugSelect>
              <Text $ls={0.2}>Debug Filter</Text>
            </DebugBox>
          </ToolSection>
        </ToolGroup>
        <ModeSwitch>
          <ModeItem>
            <DesignerIcon />
            <Text $size={24} $weight={300} $ls={0.2} $dy={-2}>Designer</Text>
          </ModeItem>
          <Chevron w={10} h={24} t={2} color="#a4a4a4" />
          <ModeItem $active>
            <GraphIcon />
            <Text $size={24} $ls={0.3} $dy={-1} $color="#eadfd0">Graph</Text>
          </ModeItem>
        </ModeSwitch>
      </Toolbar>

      <Work>
        <SideColumn>
          <DockTabs><Dock icon={<BookIcon />} label="My Blueprint" /></DockTabs>
          <Panel $h={399}>
            <PanelTools $h={39} $mb={6} $pl={5}>
              <AddNew>
                <Cross t={4.5} />
                <Text $color="#fff" $dy={1}>Add New</Text>
                <Caret color="#fff" />
              </AddNew>
              <SearchField $w={163} $ml={2}>
                <Text $color="#8b8b8b">Search</Text>
                <SearchIcon />
              </SearchField>
              <EyeMenu $ml={8}><EyeIcon /><Caret /></EyeMenu>
            </PanelTools>
            <Section title="Graphs" open />
            <TreeRow $h={25}>
              <Expander><TreeArrow /></Expander>
              <TabIcon $w={23}><GraphsIcon /></TabIcon>
              <Text $ls={0.6} $dy={1}>EventGraph</Text>
            </TreeRow>
            {["Event Pre Construct", "Event Construct", "Event Tick"].map((t) => (
              <TreeRow key={t} $pl={25} $gap={5}>
                <EventDiamond />
                <Text $ls={0.5} $dy={1}>{t}</Text>
              </TreeRow>
            ))}
            <Section title="Functions" note="(36 Overridable)" mt={3} open />
            <TreeRow $pl={13} $gap={5}>
              <FuncGlyph $size={24} $color="#a3dfb0">f</FuncGlyph>
              <Text $ls={0.5}>GetPercent_0</Text>
            </TreeRow>
            <Section title="Macros" mt={2} />
            <Section title="Variables" mt={3} open />
            <TreeRow $h={27} $selected $pl={13} $gap={3}>
              <BarIcon />
              <Text $color="#0e0e0e" $ls={0.65}>ProgressBar_76</Text>
              <EyeToggle><DarkEyeIcon /></EyeToggle>
            </TreeRow>
            <Section title="Event Dispatchers" mt={3} ls={0.55} />
            <Section title="Local Variables" note="(GetPercent_0)" mt={2} />
          </Panel>

          <DockTabs $mt={5}><Dock icon={<InfoIcon />} label="Details" /></DockTabs>
          <Panel $h={398}>
            <PanelTools $h={31} $mb={2} $pl={3} $flat>
              <SearchField $w={237}>
                <Text $color="#8b8b8b" $ls={0.25}>Search Details</Text>
                <SearchIcon />
              </SearchField>
              <GridToggle><ListIcon /></GridToggle>
              <EyeMenu $ml={3}><EyeIcon /><Caret color="#b5b5b5" /></EyeMenu>
            </PanelTools>
            <DetailsBox>
              <DetailsHead>
                <HeadArrow><TreeArrow /></HeadArrow>
                <Text $weight={700} $shadow $ls={0.3} $color="#e6e6e6">Variable</Text>
              </DetailsHead>
              <Prop name="Variable Name" h={26}>
                <TextInput><Text $size={13.2} $ls={0.65} $color="#c9c9c9">ProgressBar_76</Text></TextInput>
              </Prop>
              <Prop name="Variable Type" h={32}>
                <TypeButton>
                  <BarIcon muted="faint" />
                  <Text $size={13.2} $ls={0.75} $color="#222">Progress Bar</Text>
                  <Push />
                  <Caret color="#1c1c1c" />
                </TypeButton>
                <BarIcon muted="soft" />
              </Prop>
              <Prop name="Expose to Cinematics" h={25}><CheckBox /></Prop>
              <Prop name="Category" h={35}>
                <Combo>
                  <ComboText><Text $size={13.2} $ls={0.6} $color="#111">Default</Text></ComboText>
                  <Caret color="#111" />
                </Combo>
              </Prop>
              <MoreBar>
                <svg width="13" height="9" viewBox="0 0 13 9"><path d="M0 0H13V1.800H0ZM.8 3H12.200L6.500 9Z" fill="#e0e0e0" /></svg>
              </MoreBar>
            </DetailsBox>
          </Panel>
        </SideColumn>

        <GraphColumn>
          <DockTabs>
            <Dock icon={<GraphsIcon w={20} />} label="Event Graph" dim />
            <Dock icon={<FuncGlyph $size={23}>f</FuncGlyph>} label="Get Percent 0" mark iw={28} ls={0.1} />
          </DockTabs>
          <Canvas>
            <Vignette />
            <Crumbs>
              <CrumbIcon $mr={8}><StarIcon /></CrumbIcon>
              <CrumbRule $mr={14} />
              <CrumbIcon $mr={31}><ArrowIcon /></CrumbIcon>
              <CrumbIcon $mr={18}><ArrowIcon flip /></CrumbIcon>
              <CrumbRule $mr={16} />
              <CrumbIcon $mr={21}><FuncGlyph $size={34}>f</FuncGlyph></CrumbIcon>
              <Text $size={22.5} $ls={0.9} $color="#7f7f7f">healthBar</Text>
              <CrumbIcon $ml={10} $mr={11}><Chevron /></CrumbIcon>
              <Text $size={22.5} $ls={0.93} $color="#7f7f7f">Get Percent 0 (pure)</Text>
              <Push />
              <ZoomLabel><Text $size={22.5} $weight={700} $ls={0.4} $color="#2e2e2e">Zoom 1:1</Text></ZoomLabel>
            </Crumbs>

            <Watermark>WIDGET BLUEPRINT</Watermark>

            {Object.entries(nodes).map(([k, n]) => (
              <NodeShadow key={k} {...n} $r={corner[k]} />
            ))}

            <Wires width="1557" height="827" viewBox="351 191 1557 827" fill="none">
              <path d="M695 580H889M1111 580H1589" stroke="#f4f4f4" strokeWidth="3" />
              <path d="M833 679C872 679 860 614 889 614" stroke="#0f8fd0" strokeWidth="1.800" />
              <path d="M1110 649C1128 649 1130 630 1151 630M1110 649C1140 649 1142 690 1171 690" stroke="#0f8fd0" strokeWidth="1.800" />
              <path d="M1387 630C1408 630 1408 647 1429 647M1386 690C1408 690 1408 676 1429 676M1528 661C1560 661 1556 614 1589 614" stroke="#84d338" strokeWidth="1.800" />
            </Wires>

            <Node {...nodes.entry}>
              <NodeHead $tint="purple">
                <HeadIcon><EntryIcon /></HeadIcon>
                <NodeTitle>Get Percent 0</NodeTitle>
              </NodeHead>
              <PinRow $h={18} $mt={12} $end><ExecPin /></PinRow>
            </Node>

            <Node {...nodes.char}>
              <NodeHead $tint="green">
                <HeadIcon><FuncGlyph $size={24} $color="#a6e39c">f</FuncGlyph></HeadIcon>
                <NodeTitle ls={0.45}>Get Player Character</NodeTitle>
              </NodeHead>
              <PinRow $h={24} $mt={8} $pl={13}>
                <PinGroup>
                  <Pin hollow color="#23d49b" />
                  <PinText ls={0.1}>Player Index</PinText>
                  <IndexBox><Text $color="#f0f0f0">0</Text></IndexBox>
                </PinGroup>
                <PinGroup><PinText ls={0.1}>Return Value</PinText><Pin /></PinGroup>
              </PinRow>
            </Node>

            <Node {...nodes.cast}>
              <NodeHead $tint="teal" $pl={11}>
                <HeadIcon $w={23}><CastIcon /></HeadIcon>
                <NodeTitle ls={0.55}>Cast To player_0_1</NodeTitle>
              </NodeHead>
              <PinRow $h={18} $mt={12}><ExecPin /><ExecPin /></PinRow>
              <PinRow $h={20} $mt={15}>
                <PinGroup><Pin /><PinText>Object</PinText></PinGroup>
                <PinGroup $drop={3}><PinText ls={0.1}>Cast Failed</PinText><ExecPin hollow /></PinGroup>
              </PinRow>
              <PinRow $h={20} $mt={15} $end><PinGroup><PinText ls={0.1}>As Player 0 1</PinText><Pin /></PinGroup></PinRow>
            </Node>

            <Pill {...nodes.cur}>
              <PinGroup><Pin /><PinText>Target</PinText></PinGroup>
              <PinGroup><PinText ls={0}>Current Health</PinText><Pin color={GREEN} /></PinGroup>
            </Pill>
            <Pill {...nodes.max}>
              <PinGroup><Pin /><PinText>Target</PinText></PinGroup>
              <PinGroup><PinText ls={0}>Max Health</PinText><Pin color={GREEN} /></PinGroup>
            </Pill>

            <MathNode {...nodes.div}>
              <PinColumn><Pin color={GREEN} /><Pin color={GREEN} /></PinColumn>
              <DivideIcon />
              <Pin color={GREEN} />
            </MathNode>

            <Node {...nodes.ret}>
              <NodeHead $tint="purple" $pl={9}>
                <HeadIcon><EntryIcon /></HeadIcon>
                <NodeTitle ls={0.4}>Return Node</NodeTitle>
              </NodeHead>
              <PinRow $h={18} $mt={12}><ExecPin /></PinRow>
              <PinRow $h={20} $mt={15}><PinGroup><Pin color={GREEN} /><PinText ls={0.1}>Return Value</PinText></PinGroup></PinRow>
            </Node>
          </Canvas>
        </GraphColumn>
      </Work>
    </Window>
  );
}
